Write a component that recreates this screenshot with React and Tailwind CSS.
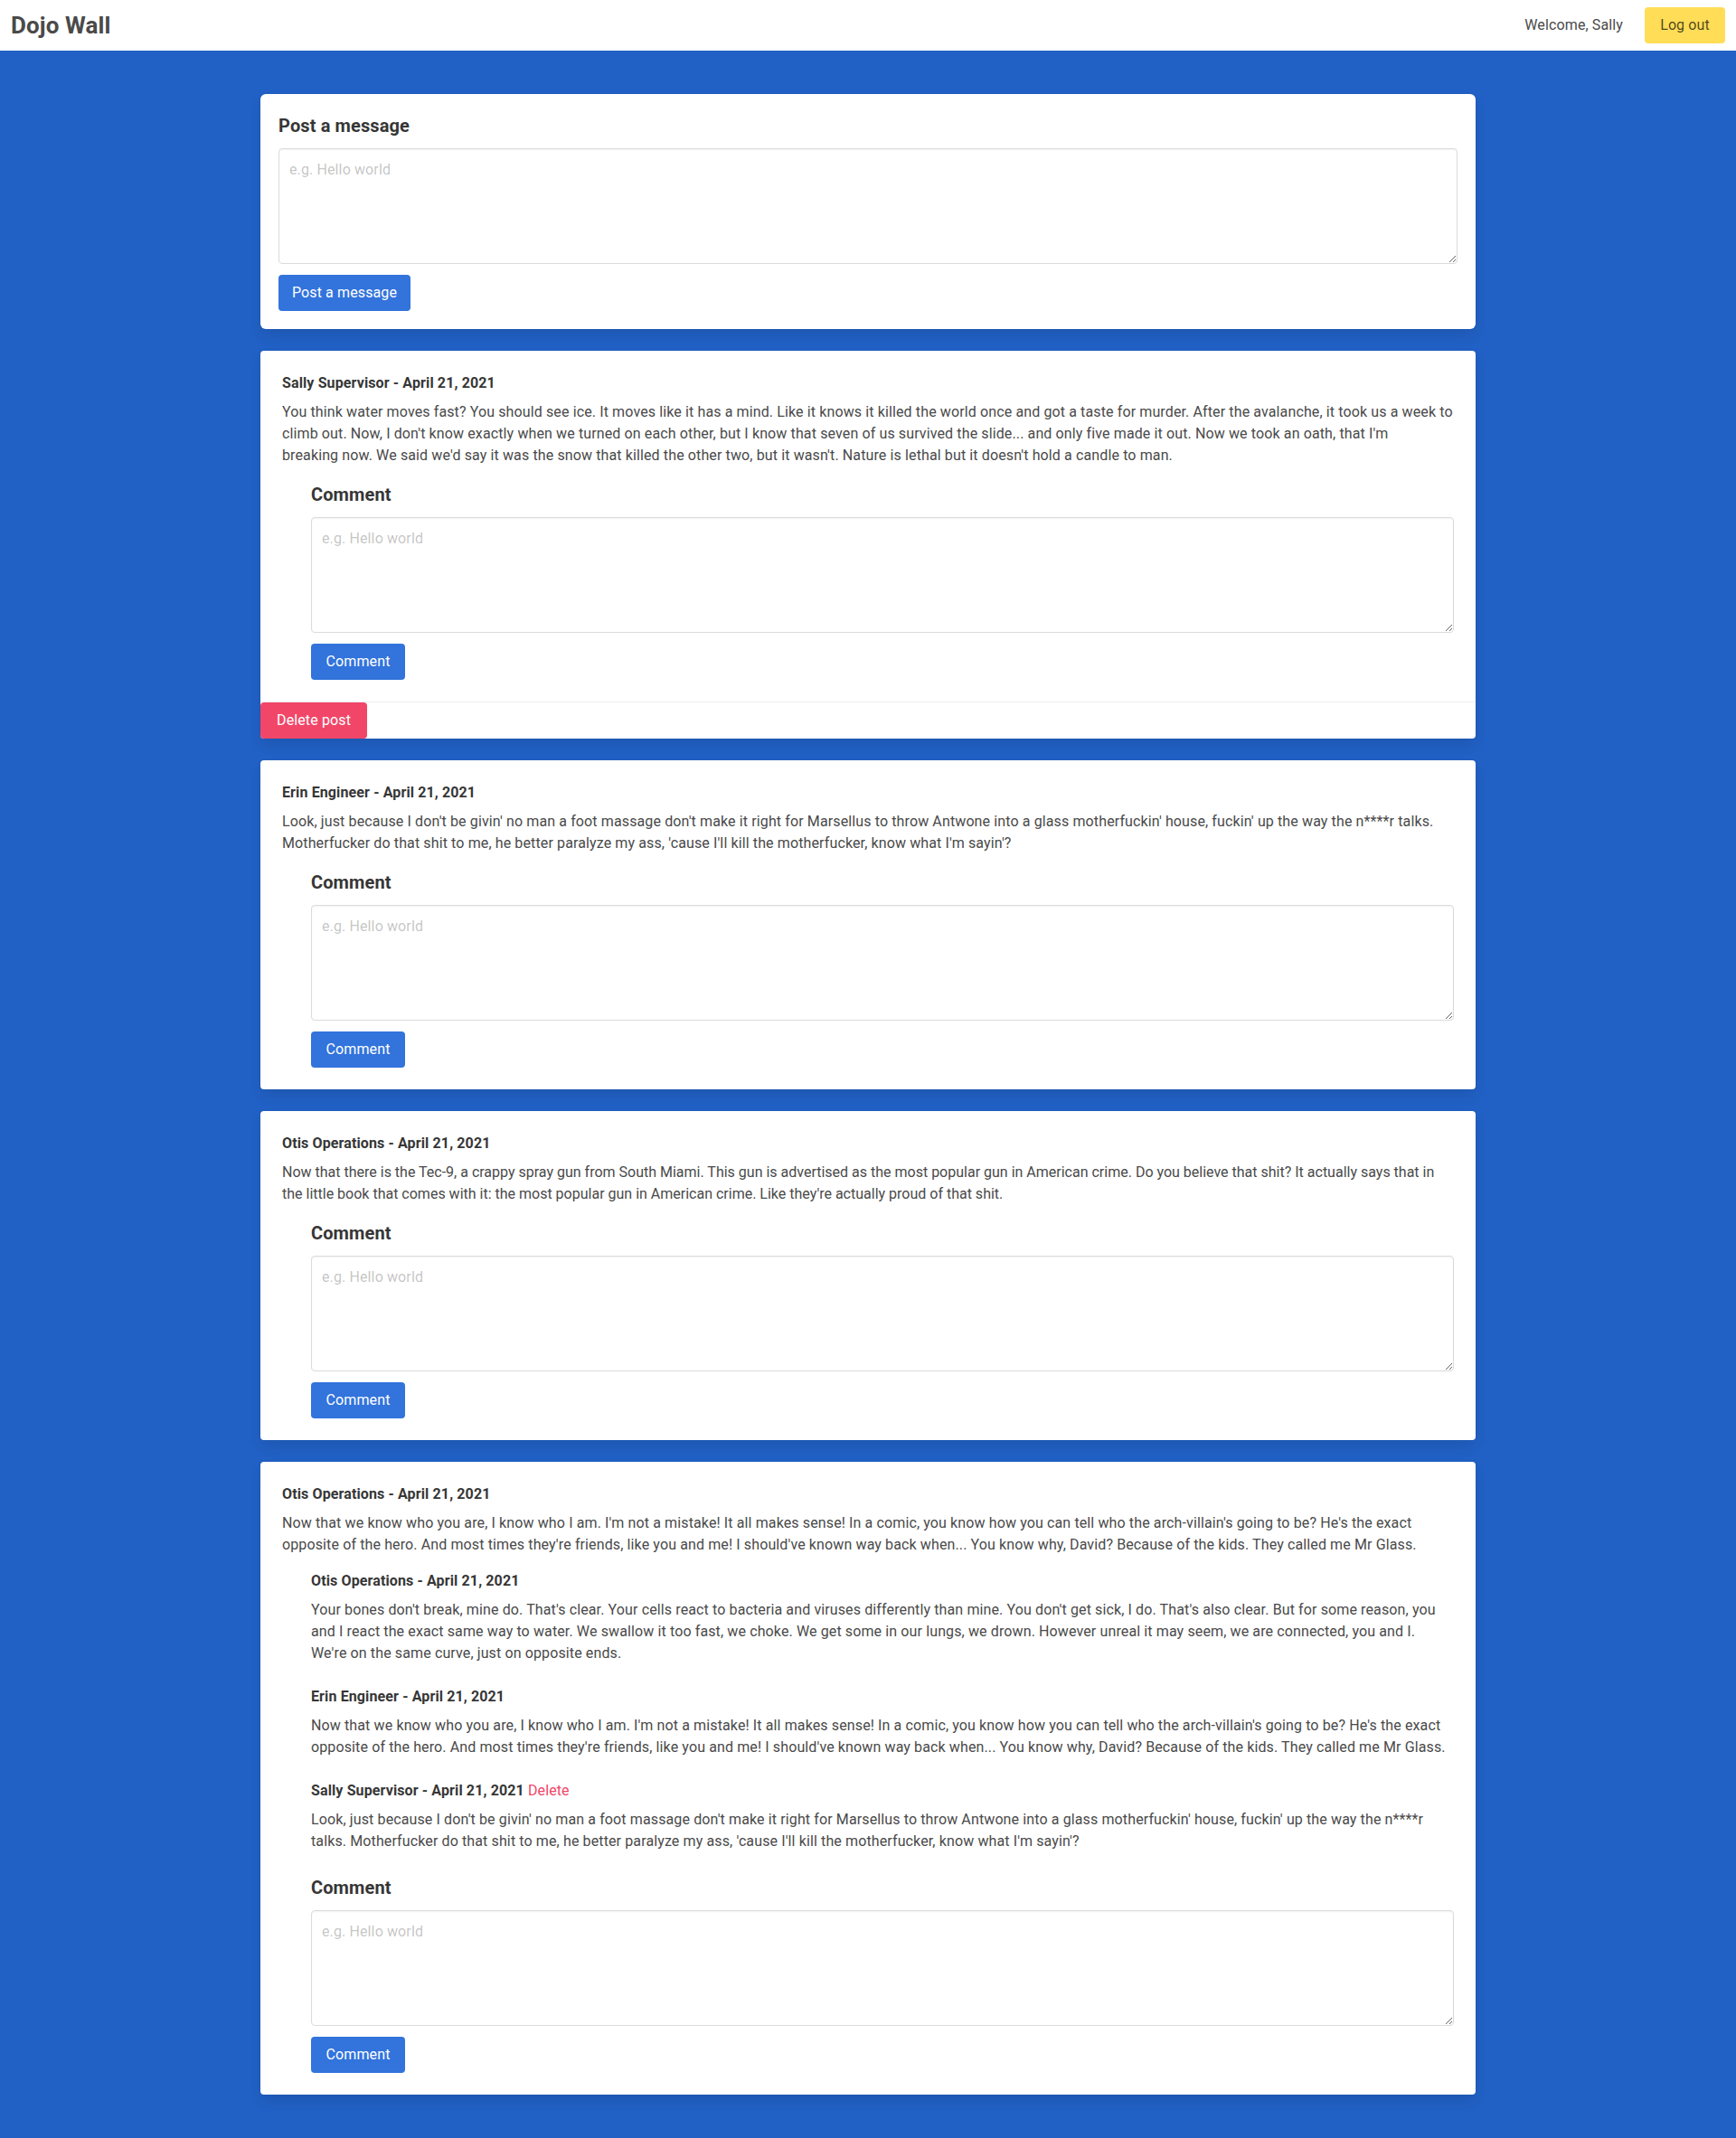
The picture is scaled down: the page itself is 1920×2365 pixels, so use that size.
import React from "react";

const LUKE = "Look, just because I don't be givin' no man a foot massage don't make it right for Marsellus to throw Antwone into a glass motherfuckin' house, fuckin' up the way the n****r talks. Motherfucker do that shit to me, he better paralyze my ass, 'cause I'll kill the motherfucker, know what I'm sayin'?";
const GLASS = "Now that we know who you are, I know who I am. I'm not a mistake! It all makes sense! In a comic, you know how you can tell who the arch-villain's going to be? He's the exact opposite of the hero. And most times they're friends, like you and me! I should've known way back when... You know why, David? Because of the kids. They called me Mr Glass.";

const posts = [
    {
        id: 1,
        author: "Sally Supervisor",
        mine: true,
        text: "You think water moves fast? You should see ice. It moves like it has a mind. Like it knows it killed the world once and got a taste for murder. After the avalanche, it took us a week to climb out. Now, I don't know exactly when we turned on each other, but I know that seven of us survived the slide... and only five made it out. Now we took an oath, that I'm\nbreaking now. We said we'd say it was the snow that killed the other two, but it wasn't. Nature is lethal but it doesn't hold a candle to man.",
        comments: [],
    },
    { id: 2, author: "Erin Engineer", text: LUKE, comments: [] },
    {
        id: 3,
        author: "Otis Operations",
        tight: true,
        text: "Now that there is the Tec-9, a crappy spray gun from South Miami. This gun is advertised as the most popular gun in American crime. Do you believe that shit? It actually says that in the little book that comes with it: the most popular gun in American crime. Like they're actually proud of that shit.",
        comments: [],
    },
    {
        id: 4,
        author: "Otis Operations",
        text: GLASS,
        comments: [
            { id: 1, author: "Otis Operations", text: "Your bones don't break, mine do. That's clear. Your cells react to bacteria and viruses differently than mine. You don't get sick, I do. That's also clear. But for some reason, you and I react the exact same way to water. We swallow it too fast, we choke. We get some in our lungs, we drown. However unreal it may seem, we are connected, you and I. We're on the same curve, just on opposite ends." },
            { id: 2, author: "Erin Engineer", text: GLASS },
            { id: 3, author: "Sally Supervisor", text: LUKE, mine: true },
        ],
    },
];

const TextBox = () => (
    <textarea
        placeholder="e.g. Hello world"
        className="block w-full h-32 min-h-32 resize-y rounded border border-[#dbdbdb] bg-white p-[11px] text-base leading-6 text-[#363636] shadow-[inset_0_1px_2px_rgba(10,10,10,0.05)] placeholder:text-[#363636]/30 outline-none"
    />
);

const Post = ({ post }) => (
    <div className="bg-white rounded shadow-[0_8px_16px_-2px_rgba(10,10,10,0.1),0_0_0_1px_rgba(10,10,10,0.02)]">
        <div className="p-6">
            <p className="font-bold text-[#363636] leading-6">{post.author} - April 21, 2021</p>
            <p className={`mt-2 leading-6 whitespace-pre-line ${post.tight ? "tracking-[0px]" : ""}`}>{post.text}</p>
            <div className="ml-8 mt-4">
                {post.comments.map(c => (
                    <div key={c.id} className="mb-6">
                        <p className="font-bold text-[#363636] leading-6">
                            {c.author} - April 21, 2021
                            {c.mine && <span className="font-normal text-[#f14668]"> Delete</span>}
                        </p>
                        <p className="mt-2 leading-6">{c.text}</p>
                    </div>
                ))}
                <label className="block text-[20px] font-bold leading-[30px] text-[#363636] mb-[10px]">Comment</label>
                <TextBox />
                <button className="mt-3 h-10 w-[104px] rounded bg-[#3273dc] text-white text-base">Comment</button>
            </div>
        </div>
        {post.mine && (
            <div className="border-t border-[#ededed]">
                <button className="h-10 w-[118px] rounded bg-[#f14668] text-white text-base">Delete post</button>
            </div>
        )}
    </div>
);

const App = () => {
    return (
        <div className="min-h-screen bg-[#2160c4] text-[#4a4a4a] text-base tracking-[0.12px] font-['Roboto',sans-serif]">
            <nav className="h-14 bg-white flex items-center justify-between">
                <div className="px-3 text-[26px] font-bold">Dojo Wall</div>
                <div className="flex items-center">
                    <span className="px-3">Welcome, Sally</span>
                    <div className="px-3">
                        <button className="h-10 w-[89px] rounded bg-[#ffdd57] text-black/70 text-base">Log out</button>
                    </div>
                </div>
            </nav>
            <section className="px-6 py-12">
                <div className="max-w-[1344px] mx-auto flex flex-col gap-6">
                    <div className="bg-white rounded-md p-5 shadow-[0_8px_16px_-2px_rgba(10,10,10,0.1),0_0_0_1px_rgba(10,10,10,0.02)]">
                        <label className="block text-[20px] font-bold leading-[30px] text-[#363636] mb-[10px]">Post a message</label>
                        <TextBox />
                        <button className="mt-3 h-10 w-[146px] rounded bg-[#3273dc] text-white text-base">Post a message</button>
                    </div>
                    {posts.map(p => <Post key={p.id} post={p} />)}
                </div>
            </section>
        </div>
    );
};

export default App;
